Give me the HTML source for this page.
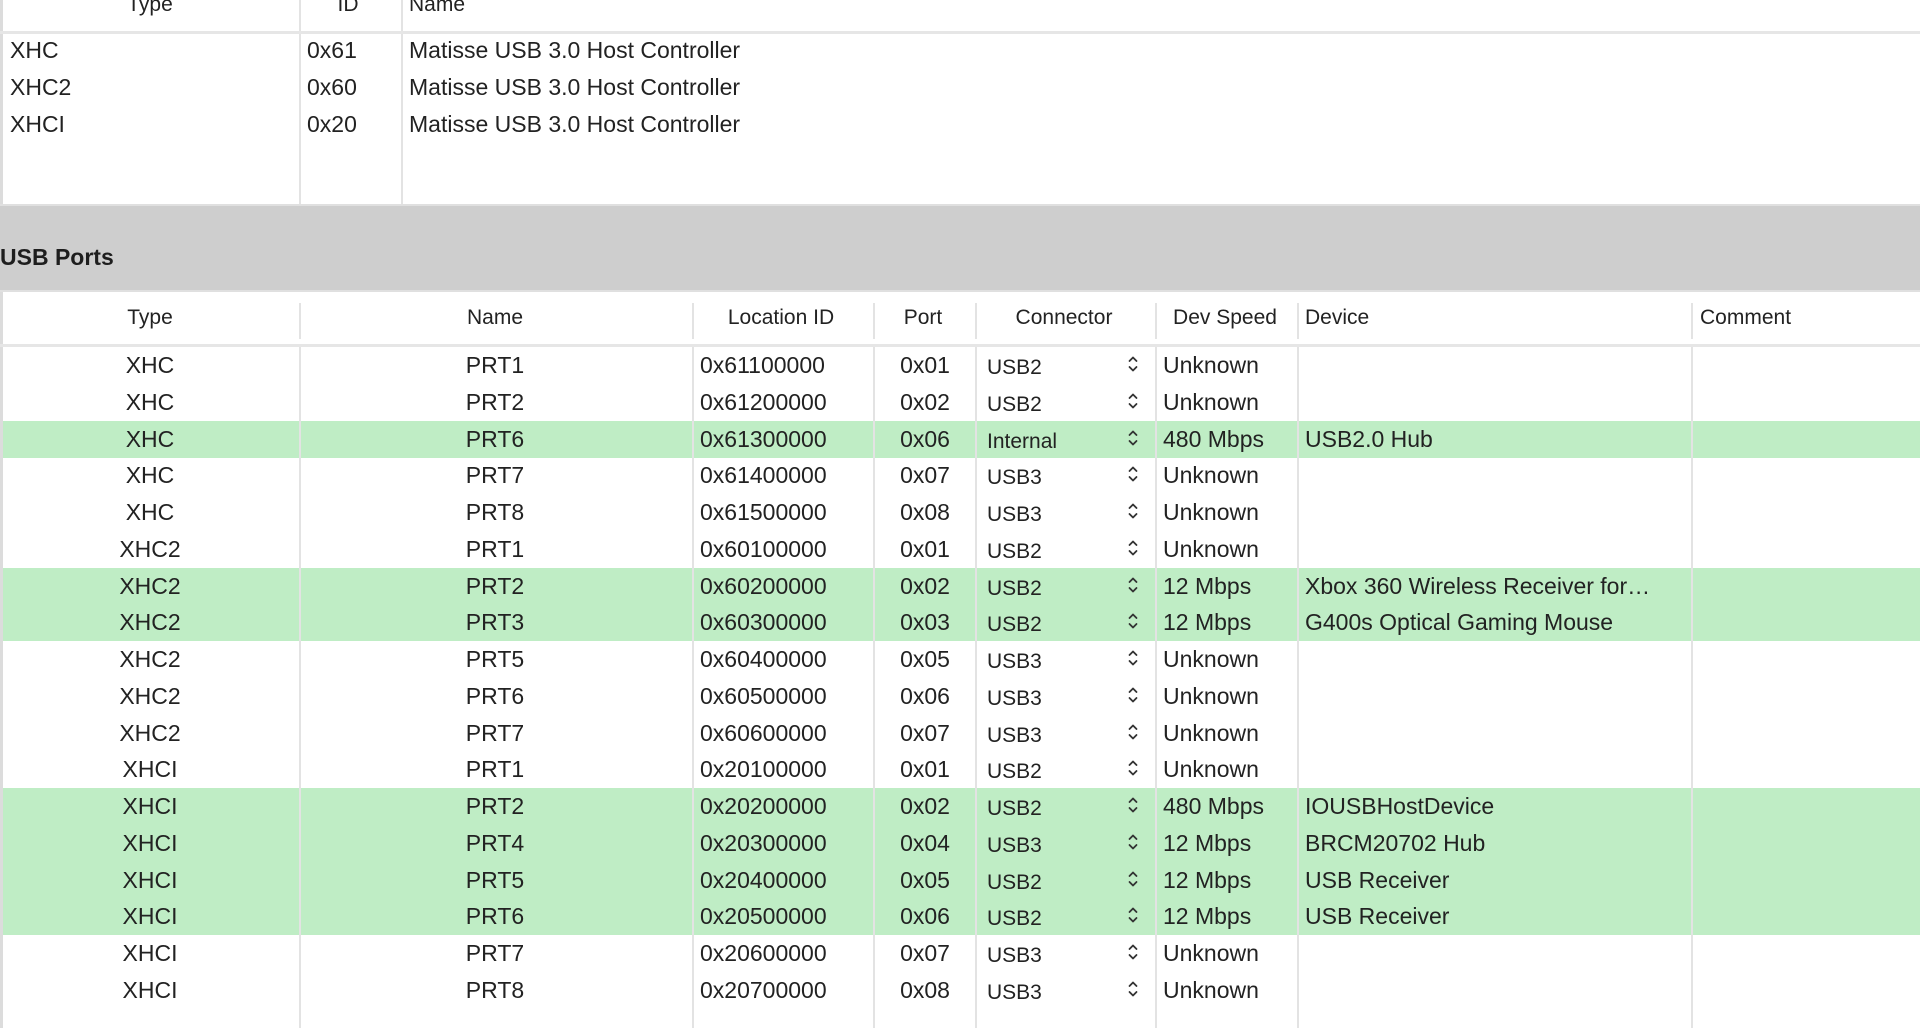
<!DOCTYPE html>
<html><head><meta charset="utf-8"><style>
html,body{margin:0;padding:0;width:1920px;height:1028px;overflow:hidden;background:#fff;font-family:"Liberation Sans",Arial,sans-serif;color:#222;}
.a{position:absolute;white-space:nowrap;}
.vl{position:absolute;width:2px;background:#e3e3e3;}
.hl{position:absolute;height:3px;background:#e6e6e6;left:0;width:1920px;}
.row{position:absolute;left:3px;width:1917px;height:37px;font-size:23px;}
.row span{position:absolute;top:5px;white-space:nowrap;}
.g{background:#bfedc5;}
.c{transform:translateX(-50%);}
.con{font-size:21px;top:9px!important;}
.chev{position:absolute;left:1124px;top:8px;width:12px;height:18px;}
.h{font-size:21px;position:absolute;top:306px;white-space:nowrap;}
.t{font-size:23px;}
</style></head><body>
<div class="a" style="left:0;top:0;width:3px;height:205px;background:#dcdcdc"></div>
<div class="a" style="left:150px;top:-7px;font-size:21px;transform:translateX(-50%)">Type</div>
<div class="a" style="left:348px;top:-7px;font-size:21px;transform:translateX(-50%)">ID</div>
<div class="a" style="left:409px;top:-7px;font-size:21px">Name</div>
<div class="vl" style="left:299px;top:0;height:205px"></div>
<div class="vl" style="left:401px;top:0;height:205px"></div>
<div class="hl" style="top:31px"></div>
<div class="a t" style="left:10px;top:37px">XHC</div>
<div class="a t" style="left:307px;top:37px">0x61</div>
<div class="a t" style="left:409px;top:37px">Matisse USB 3.0 Host Controller</div>
<div class="a t" style="left:10px;top:74px">XHC2</div>
<div class="a t" style="left:307px;top:74px">0x60</div>
<div class="a t" style="left:409px;top:74px">Matisse USB 3.0 Host Controller</div>
<div class="a t" style="left:10px;top:111px">XHCI</div>
<div class="a t" style="left:307px;top:111px">0x20</div>
<div class="a t" style="left:409px;top:111px">Matisse USB 3.0 Host Controller</div>
<div class="a" style="left:0;top:204px;width:1920px;height:88px;background:#cecece;border-top:2px solid #e0e0e0;box-sizing:border-box"></div>
<div class="a" style="left:0;top:244px;font-size:23px;font-weight:bold;color:#1e1e1e">USB Ports</div>
<div class="a" style="left:0;top:290px;width:1920px;height:2px;background:#e0e0e0"></div>
<div class="a" style="left:0;top:292px;width:3px;height:736px;background:#dcdcdc"></div>
<div class="h c" style="left:150px">Type</div>
<div class="h c" style="left:495px">Name</div>
<div class="h c" style="left:781px">Location ID</div>
<div class="h c" style="left:923px">Port</div>
<div class="h c" style="left:1064px">Connector</div>
<div class="h c" style="left:1225px">Dev Speed</div>
<div class="h" style="left:1305px">Device</div>
<div class="h" style="left:1700px">Comment</div>
<div class="hl" style="top:344px"></div>
<div id="rows"></div>
<script>
var d=[["XHC","PRT1","0x61100000","0x01","USB2","Unknown","",0],
["XHC","PRT2","0x61200000","0x02","USB2","Unknown","",0],
["XHC","PRT6","0x61300000","0x06","Internal","480 Mbps","USB2.0 Hub",1],
["XHC","PRT7","0x61400000","0x07","USB3","Unknown","",0],
["XHC","PRT8","0x61500000","0x08","USB3","Unknown","",0],
["XHC2","PRT1","0x60100000","0x01","USB2","Unknown","",0],
["XHC2","PRT2","0x60200000","0x02","USB2","12 Mbps","Xbox 360 Wireless Receiver for…",1],
["XHC2","PRT3","0x60300000","0x03","USB2","12 Mbps","G400s Optical Gaming Mouse",1],
["XHC2","PRT5","0x60400000","0x05","USB3","Unknown","",0],
["XHC2","PRT6","0x60500000","0x06","USB3","Unknown","",0],
["XHC2","PRT7","0x60600000","0x07","USB3","Unknown","",0],
["XHCI","PRT1","0x20100000","0x01","USB2","Unknown","",0],
["XHCI","PRT2","0x20200000","0x02","USB2","480 Mbps","IOUSBHostDevice",1],
["XHCI","PRT4","0x20300000","0x04","USB3","12 Mbps","BRCM20702 Hub",1],
["XHCI","PRT5","0x20400000","0x05","USB2","12 Mbps","USB Receiver",1],
["XHCI","PRT6","0x20500000","0x06","USB2","12 Mbps","USB Receiver",1],
["XHCI","PRT7","0x20600000","0x07","USB3","Unknown","",0],
["XHCI","PRT8","0x20700000","0x08","USB3","Unknown","",0]];
var chev='<svg class="chev" viewBox="0 0 12 18"><path d="M2.5 6 L6 2.5 L9.5 6 M2.5 12 L6 15.5 L9.5 12" fill="none" stroke="#333" stroke-width="1.8" stroke-linecap="round" stroke-linejoin="round"/></svg>';
var h='';
for(var i=0;i<d.length;i++){var r=d[i];var t=347+i*36.75;
h+='<div class="row'+(r[7]?' g':'')+'" style="top:'+t+'px">'+
'<span class="c" style="left:147px">'+r[0]+'</span>'+
'<span class="c" style="left:492px">'+r[1]+'</span>'+
'<span style="left:697px">'+r[2]+'</span>'+
'<span class="c" style="left:922px">'+r[3]+'</span>'+
'<span class="con" style="left:984px">'+r[4]+'</span>'+chev+
'<span style="left:1160px">'+r[5]+'</span>'+
'<span style="left:1302px">'+r[6]+'</span></div>';}
var xs=[299,692,873,975,1155,1297,1691];
for(var j=0;j<xs.length;j++){h+='<div class="vl" style="left:'+xs[j]+'px;top:347px;height:681px"></div>';
h+='<div class="vl" style="left:'+xs[j]+'px;top:303px;height:36px"></div>';}
document.getElementById('rows').innerHTML=h;
</script>
</body></html>
